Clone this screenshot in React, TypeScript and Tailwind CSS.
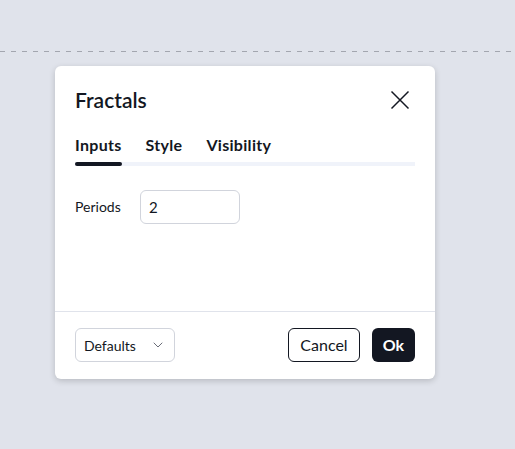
import React, { useState } from 'react';
import { ChevronDown } from 'lucide-react';

const font = { fontFamily: 'Lato, "Noto Sans", sans-serif' };

const App: React.FC = () => {
  const [tab, setTab] = useState('Inputs');
  const [periods, setPeriods] = useState('2');
  const tabs = ['Inputs', 'Style', 'Visibility'];

  return (
    <div className="h-[449px] w-[515px] overflow-hidden bg-[#e0e3eb] pt-[51px]" style={font}>
      <svg width="515" height="1" className="block">
        <line x1="0" y1="0.5" x2="515" y2="0.5" stroke="#a3a6af" strokeWidth="1" strokeDasharray="5 6" />
      </svg>
      <div className="ml-[55px] mt-[14px] w-[380px] rounded-md bg-white shadow-[0_2px_6px_rgba(0,0,0,0.18)]">
        <div className="flex items-center justify-between px-5 pt-[22px]">
          <h2 className="text-[21px] font-semibold leading-6 text-[#131722]">Fractals</h2>
          <button className="mr-[3px] text-[#131722]">
            <svg width="24" height="24" viewBox="0 0 24 24">
              <path d="M3.5 3.5 L20.5 20.5 M20.5 3.5 L3.5 20.5" stroke="currentColor" strokeWidth="1.5" fill="none" />
            </svg>
          </button>
        </div>
        <div className="mx-5 mt-[23px] flex gap-6 border-b-4 border-[#f0f3fa]">
          {tabs.map(t => (
            <button
              key={t}
              onClick={() => setTab(t)}
              className="relative pb-[7px] text-[16px] font-bold leading-5 tracking-[0.3px] text-[#131722]"
            >
              {t}
              {tab === t && (
                <span className="absolute bottom-[-4px] left-0 right-0 h-1 rounded-full bg-[#131722]" />
              )}
            </button>
          ))}
        </div>
        <div className="flex h-[145px] items-start gap-5 px-5 pt-[24px]">
          <span className="mt-[6px] w-[45px] text-[14px] text-[#131722]">Periods</span>
          <input
            value={periods}
            onChange={e => setPeriods(e.target.value)}
            className="h-[34px] w-[100px] rounded-md border border-[#d1d4dc] px-2 text-[15px] text-[#131722] outline-none"
          />
        </div>
        <div className="flex items-center justify-between border-t border-[#e0e3eb] px-5 pb-[17px] pt-4">
          <button className="flex h-[34px] w-[100px] items-center justify-between rounded-md border border-[#d1d4dc] pl-2 pr-2 text-[14px] text-[#131722]">
            Defaults
            <ChevronDown size={16} strokeWidth={1.5} className="text-[#6a6d78]" />
          </button>
          <div className="flex gap-3">
            <button className="h-[34px] rounded-md border border-[#131722] px-[11px] text-[16px] text-[#131722]">
              Cancel
            </button>
            <button className="h-[34px] rounded-md bg-[#131722] px-[11px] text-[16px] font-bold text-white">
              Ok
            </button>
          </div>
        </div>
      </div>
    </div>
  );
};

export default App;
